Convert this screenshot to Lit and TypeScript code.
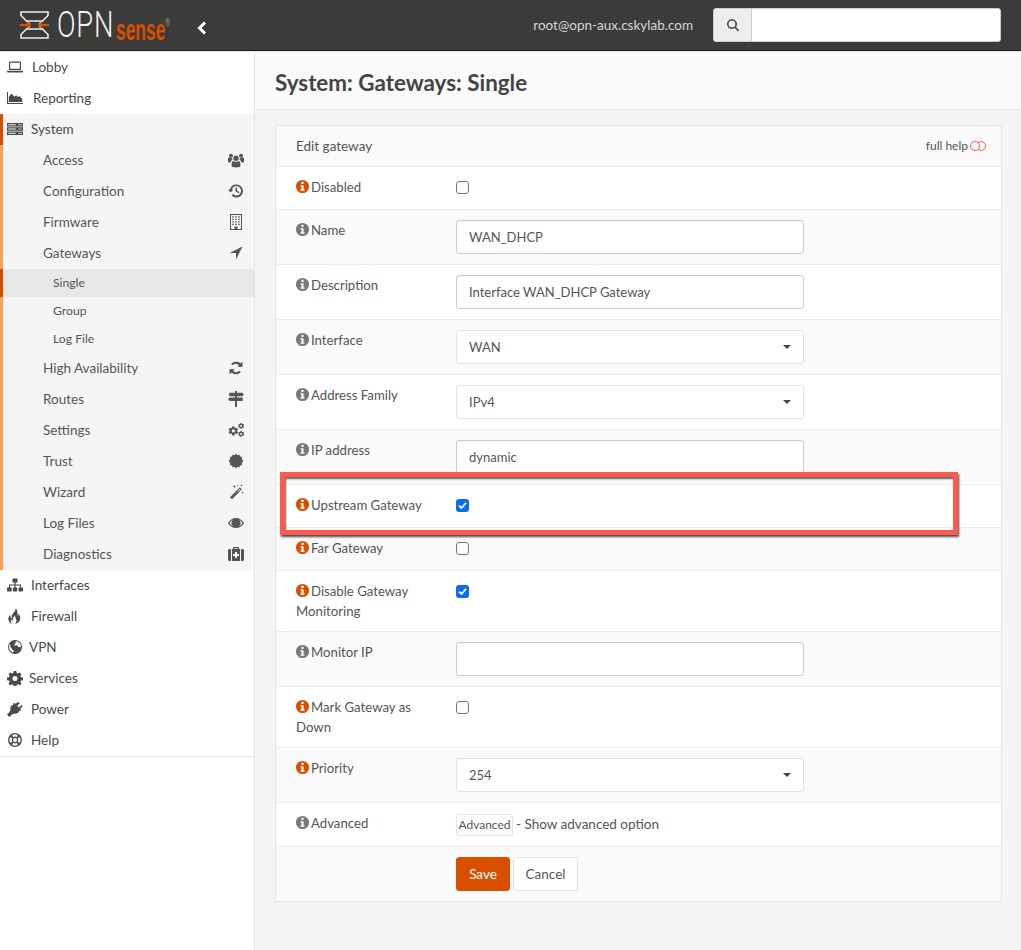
import { LitElement, html, css, svg } from 'lit';
import { customElement } from 'lit/decorators.js';

// Hand drawn versions of the icon glyphs, all on a 16 unit grid
const ICONS: Record<string, unknown> = {
  laptop: svg`<path fill-rule="evenodd" d="M3 2.500h10a1 1 0 0 1 1 1V11H2V3.500a1 1 0 0 1 1-1zM3.200 3.700v6.100h9.600V3.700z"/><path d="M0 11.700h16v.8a1 1 0 0 1-1 1H1a1 1 0 0 1-1-1z"/>`,
  chart: svg`<path d="M0 2h1v11h15v1H0z"/><path d="M1.800 12V7l2.600-3.400 3 3.200 1.800-1.600L11 7l1.600-1 2.600 3v3z"/>`,
  server: svg`<path fill-rule="evenodd" d="M0 2h16v3.400H0zM0 6.300h16v3.400H0zM0 10.600h16V14H0zM1.200 3.200v1h7.600v-1zM1.200 7.500v1h7.600v-1zM1.200 11.800v1h7.600v-1zM11.500 3.100v1.200h1.200V3.100zM13.500 3.100v1.200h1.200V3.100zM11.500 7.400v1.200h1.200V7.400zM13.500 7.400v1.200h1.200V7.400zM11.500 11.700v1.200h1.200v-1.200zM13.500 11.700v1.200h1.200v-1.200z"/>`,
  users: svg`<circle cx="8" cy="6.200" r="2.700"/><circle cx="3" cy="3.800" r="2"/><circle cx="13" cy="3.800" r="2"/><path d="M3.600 14.500v-2.600c0-2 1-3 2-3 .7.600 1.500.9 2.400.9s1.700-.3 2.400-.9c1 0 2 1 2 3v2.600c-1 .6-2.400.9-4.400.9s-3.400-.3-4.400-.9z"/><path d="M0 6.800c0-.8.500-1.500 1-1.500.5.400 1.200.7 2 .7.300 0 .500 0 .700-.1.200.800.500 1.400 1 1.900-1.200.4-2 1.300-2.200 2.700H1c-.6 0-1-.3-1-1zM16 6.800c0-.8-.5-1.500-1-1.500-.5.400-1.200.7-2 .7-.3 0-.5 0-.7-.1-.2.800-.5 1.400-1 1.900 1.200.4 2 1.300 2.200 2.700H15c.6 0 1-.3 1-1z"/>`,
  history: svg`<path d="M8.500 1.500a6.500 6.500 0 1 1-4.800 10.900l1.300-1.300a4.700 4.700 0 1 0-1.200-4.600H5.500L2.600 9.500 0 6.500h2A6.500 6.500 0 0 1 8.500 1.500z"/><path d="M7.600 4.500h1.500v3.300l2.300 1.300-.7 1.200-3.100-1.800z"/>`,
  building: svg`<path fill-rule="evenodd" d="M2 0h12v16H2zM3 1v14h3.500v-2.500h3V15H13V1zM4.200 2.200h1.500v1.300H4.200zM7.200 2.200h1.500v1.300H7.200zM10.200 2.200h1.500v1.300h-1.500zM4.200 4.700h1.500V6H4.200zM7.200 4.700h1.500V6H7.200zM10.200 4.700h1.500V6h-1.500zM4.200 7.200h1.500v1.300H4.200zM7.200 7.200h1.500v1.300H7.200zM10.200 7.200h1.500v1.300h-1.500zM4.200 9.700h1.500V11H4.200zM7.200 9.700h1.500V11H7.200zM10.200 9.700h1.500V11h-1.500z"/>`,
  arrow: svg`<path d="M14.500 1.500 8 14.500V8H1.500z"/>`,
  refresh: svg`<path d="M12.900 6.700A5.200 5.200 0 0 0 3.900 4.600" fill="none" stroke="currentColor" stroke-width="2.200"/><path d="M14.500 1.600v5.200H9.300z"/><path d="M3.100 9.300a5.200 5.200 0 0 0 9 2.100" fill="none" stroke="currentColor" stroke-width="2.200"/><path d="M1.500 14.400V9.200h5.200z"/>`,
  signs: svg`<path d="M7 0h2v1.800h5.300L16 3.500l-1.700 1.700H1.200V1.800H7zM7 5.200h2v1.400H7zM0 8.300l1.700-1.700h13v3.400H9v6H7v-6H1.700z"/>`,
  cogs: svg`<path fill-rule="evenodd" d="M4.200 4.500h2.300l.3 1.200 1 .5 1.200-.5 1.100 1.700-.9.9v1.200l.9.8-1.100 1.800-1.200-.5-1 .5-.3 1.300H4.200l-.3-1.300-1-.5-1.200.5L.6 10.300l.9-.8V8.300l-.9-.9 1.100-1.700 1.200.5 1-.5zM5.400 7.300a1.600 1.600 0 1 0 0 3.200 1.600 1.600 0 0 0 0-3.200z"/><path fill-rule="evenodd" d="M12.500 1h1.300l.2.800.7.4.8-.3.600 1-.6.600v.8l.6.600-.6 1-.8-.3-.7.4-.2.800h-1.300l-.2-.8-.7-.4-.8.3-.6-1 .6-.6v-.8l-.6-.6.6-1 .8.3.7-.4zM13.100 3a1 1 0 1 0 0 2 1 1 0 0 0 0-2zM12.500 9h1.300l.2.800.7.4.8-.3.600 1-.6.600v.8l.6.600-.6 1-.8-.3-.7.4-.2.800h-1.300l-.2-.8-.7-.4-.8.3-.6-1 .6-.6v-.8l-.6-.6.6-1 .8.3.7-.4zM13.100 11a1 1 0 1 0 0 2 1 1 0 0 0 0-2z"/>`,
  badge: svg`<circle cx="8" cy="8" r="5.800"/><path d="M8 .8l1.400 1.500 1.900-.7.7 1.900 2 .2-.2 2L15.200 8l-1.400 2.300.2 2-2 .2-.7 1.900-1.900-.7L8 15.200l-1.400-1.500-1.900.7-.7-1.900-2-.2.2-2L.8 8l1.400-2.300-.2-2 2-.2.7-1.900 1.900.7z"/>`,
  wand: svg`<path fill-rule="evenodd" d="M11.800 3.300l2 2L4 15.200l-2-2zM11.800 4.700l-2.300 2.300.6.600 2.300-2.300z"/><path d="M6.500 1l.5 1 1 .5-1 .5-.5 1L6 3l-1-.5 1-.5zM13.500 0l.4 1 1 .4-1 .4-.4 1-.4-1-1-.4 1-.4zM14.500 7.500l.4.800.8.400-.8.400-.4.800-.4-.8-.8-.4.800-.4zM9.800.8l.3.600.6.300-.6.300-.3.600-.3-.6-.6-.3.600-.3z"/>`,
  eye: svg`<path fill-rule="evenodd" d="M0 8c1.700-3 4.600-5 8-5s6.300 2 8 5c-1.700 3-4.600 5-8 5s-6.300-2-8-5zM1.500 8c1 1.500 2.300 2.700 3.900 3.400A4.300 4.300 0 0 1 5 4.500C3.500 5.300 2.400 6.500 1.500 8zM14.500 8c-.9-1.500-2-2.700-3.500-3.500a4.300 4.300 0 0 1-.4 6.900c1.600-.7 2.900-1.900 3.900-3.400z"/><circle cx="8" cy="7.500" r="3"/>`,
  medkit: svg`<path fill-rule="evenodd" d="M5 3V1.800A.8.800 0 0 1 5.800 1h4.400a.8.800 0 0 1 .8.800V3h1v12H4V3zM6.300 2.300V3h3.400v-.7zM7 6v2H5v2h2v2h2v-2h2V8H9V6z"/><path d="M3 3v12H1.500A1.500 1.500 0 0 1 0 13.500v-9A1.500 1.500 0 0 1 1.500 3zM13 3h1.500A1.500 1.500 0 0 1 16 4.500v9a1.500 1.500 0 0 1-1.500 1.500H13z"/>`,
  sitemap: svg`<path d="M5.500 1.500h5v4H8.600v2H14v3h1.300a.7.7 0 0 1 .7.700v2.600a.7.7 0 0 1-.7.700h-3.100a.7.7 0 0 1-.7-.7v-2.600a.7.7 0 0 1 .7-.7h.8V8.600H8.600v1.900h.9a.7.7 0 0 1 .7.700v2.600a.7.7 0 0 1-.7.700h-3a.7.7 0 0 1-.7-.7v-2.600a.7.7 0 0 1 .7-.7h.9V8.600H3.200v1.900H4a.7.7 0 0 1 .7.700v2.600a.7.7 0 0 1-.7.700H.7a.7.7 0 0 1-.7-.7v-2.600a.7.7 0 0 1 .7-.7H2v-3h5.400v-2H5.500z"/>`,
  fire: svg`<path d="M8.500 0c.5 2-.6 3.300-1.700 4.600C5.300 6.300 4 7.900 5 10.600 3.600 10 3 8.600 3.300 6.800 1.800 8.300 1 10 1.500 12c.4 1.700 1.700 3.200 3.500 4-1.200-1.500-1.500-3.200-.6-4.900.2 1 .8 1.600 1.500 1.900C5.400 10.500 6.600 8.800 8 7.500c-.2 2 1.900 3.500 1.400 5.800-.2.900-.6 1.800-1.300 2.700 2.500-.6 4.600-2.200 5.100-4.700.5-2.400-.6-4.600-2.300-5.900.2 1.100 0 2-.7 2.700C10.900 5 10.700 2 8.500 0z"/>`,
  globe: svg`<path fill-rule="evenodd" d="M8 1a7 7 0 1 1 0 14A7 7 0 0 1 8 1zM3 4.800c-.6.900-1 2-1 3.200 0 2.500 1.600 4.700 3.900 5.600.3-.7.800-1.100.8-1.900 0-.8-1-.8-1.500-1.300-.6-.6-.5-1.300-1.200-1.700C3.500 8.300 3 7.800 3.400 6.800zM9.500 2.300c-.3.500-.9.500-1.200 1-.2.500.5.900.2 1.400-.3.400-1 .2-1.200.7-.2.500.3 1 .8 1.100.8.200 1.300-.4 2-.1.800.300.800 1.200 1.400 1.700.5.400 1 .3 1.500.1.300-.2.700-.5 1-.2v-.2c0-2.700-1.900-5-4.500-5.500z"/>`,
  cog: svg`<path fill-rule="evenodd" d="M6.700 1h2.600l.4 2 1.300.5 1.700-1.100 1.800 1.800-1.100 1.700.6 1.300 2 .4v2.600l-2 .4-.6 1.300 1.100 1.700-1.800 1.800-1.700-1.100-1.300.5-.4 2H6.700l-.4-2-1.300-.5-1.700 1.100-1.800-1.800 1.100-1.700-.6-1.300-2-.4V7.600l2-.4.600-1.300-1.100-1.700 1.800-1.800L5 3.500l1.300-.5zM8 6a2.500 2.500 0 1 0 0 5 2.500 2.500 0 0 0 0-5z"/>`,
  plug: svg`<path d="M11.500 1l1.300 1.300L10.300 4.800l1.600 1.600 2.500-2.500L15.700 5.200l-2.500 2.500 1 1-1.200 1.200-.8-.2C11.800 12 9.500 13.200 7 12.500L4.800 13.700 2.400 16 0 13.600l2.300-2.400L3.500 9c-.7-2.500.5-4.800 2.800-5.200l-.2-.8L7.300 1.800l1 1z"/>`,
  lifering: svg`<path fill-rule="evenodd" d="M8 1a7 7 0 1 1 0 14A7 7 0 0 1 8 1zM5.300 3.100 6.100 5.300a3 3 0 0 1 3.800 0l.8-2.200a5.500 5.500 0 0 0-5.400 0zM3.100 5.300A5.500 5.500 0 0 0 3.100 10.700L5.300 9.900a3 3 0 0 1 0-3.800zM12.900 5.300l-2.200.8a3 3 0 0 1 0 3.800l2.200.8a5.500 5.500 0 0 0 0-5.400zM6.100 10.700l-.8 2.200a5.500 5.500 0 0 0 5.400 0l-.8-2.200a3 3 0 0 1-3.800 0zM8 6a2 2 0 1 0 0 4 2 2 0 0 0 0-4z"/>`,
  search: svg`<path fill-rule="evenodd" d="M6.800 1a5.800 5.800 0 0 1 4.700 9.200l3.700 3.700-1.500 1.500-3.700-3.700A5.800 5.800 0 1 1 6.800 1zM6.800 3a3.800 3.800 0 1 0 0 7.600 3.800 3.800 0 0 0 0-7.600z"/>`,
  info: svg`<path fill-rule="evenodd" d="M8 1a7 7 0 1 1 0 14A7 7 0 0 1 8 1zM6.900 3v2.200h2.200V3zM5.900 6.600v1.400h1v3H5.900v1.500h4.200V11h-1V6.600z"/>`,
};

const icon = (name: string, cls = '') =>
  html`<svg class="icon ${cls}" viewBox="0 0 16 16" fill="currentColor">${ICONS[name]}</svg>`;

interface NavTop { label: string; icon: string; slot: number; }
interface NavSub { label: string; icon: string; }

const TOP_BEFORE: NavTop[] = [
  { label: 'Lobby', icon: 'laptop', slot: 25 },
  { label: 'Reporting', icon: 'chart', slot: 26 },
];
const SYSTEM_BEFORE: NavSub[] = [
  { label: 'Access', icon: 'users' },
  { label: 'Configuration', icon: 'history' },
  { label: 'Firmware', icon: 'building' },
  { label: 'Gateways', icon: 'arrow' },
];
const SYSTEM_AFTER: NavSub[] = [
  { label: 'High Availability', icon: 'refresh' },
  { label: 'Routes', icon: 'signs' },
  { label: 'Settings', icon: 'cogs' },
  { label: 'Trust', icon: 'badge' },
  { label: 'Wizard', icon: 'wand' },
  { label: 'Log Files', icon: 'eye' },
  { label: 'Diagnostics', icon: 'medkit' },
];
const TOP_AFTER: NavTop[] = [
  { label: 'Interfaces', icon: 'sitemap', slot: 24 },
  { label: 'Firewall', icon: 'fire', slot: 24 },
  { label: 'VPN', icon: 'globe', slot: 22 },
  { label: 'Services', icon: 'cog', slot: 22 },
  { label: 'Power', icon: 'plug', slot: 24 },
  { label: 'Help', icon: 'lifering', slot: 24 },
];

type Field =
  | { kind: 'check'; checked?: boolean }
  | { kind: 'text'; value: string }
  | { kind: 'select'; value: string }
  | { kind: 'advanced' };

interface Row { label: string; help?: boolean; field: Field; }

const ROWS: Row[] = [
  { label: 'Disabled', help: true, field: { kind: 'check' } },
  { label: 'Name', field: { kind: 'text', value: 'WAN_DHCP' } },
  { label: 'Description', field: { kind: 'text', value: 'Interface WAN_DHCP Gateway' } },
  { label: 'Interface', field: { kind: 'select', value: 'WAN' } },
  { label: 'Address Family', field: { kind: 'select', value: 'IPv4' } },
  { label: 'IP address', field: { kind: 'text', value: 'dynamic' } },
  { label: 'Upstream Gateway', help: true, field: { kind: 'check', checked: true } },
  { label: 'Far Gateway', help: true, field: { kind: 'check' } },
  { label: 'Disable Gateway Monitoring', help: true, field: { kind: 'check', checked: true } },
  { label: 'Monitor IP', field: { kind: 'text', value: '' } },
  { label: 'Mark Gateway as Down', help: true, field: { kind: 'check' } },
  { label: 'Priority', help: true, field: { kind: 'select', value: '254' } },
  { label: 'Advanced', field: { kind: 'advanced' } },
];

@customElement('app-root')
export class AppRoot extends LitElement {
  static styles = css`
    :host {
      display: block;
      width: 1021px;
      height: 950px;
      overflow: hidden;
      font-family: Lato, 'Open Sans', sans-serif;
      font-size: 13.5px;
      line-height: 20px;
      color: #555;
      background: #f5f5f5;
    }
    * { box-sizing: border-box; }
    .icon { display: block; width: 16px; height: 16px; flex: none; }

    /* top bar */
    .topbar {
      height: 51px;
      display: flex;
      align-items: center;
      background: #3b3b3a;
      border-bottom: 1px solid #1f1f1f;
      padding: 0 20px 0 20px;
    }
    .logo { display: flex; align-items: center; width: 151px; height: 50px; overflow: hidden; }
    .logo svg { display: block; flex: none; }
    .opn {
      flex: none;
      width: 59px;
      margin-left: 8px;
      font-family: Roboto, 'Liberation Sans', sans-serif;
      font-size: 36px;
      font-weight: 300;
      line-height: 40px;
      letter-spacing: 1px;
      color: #f2f2f2;
      transform: scaleX(0.76);
      transform-origin: left center;
      white-space: nowrap;
    }
    .sense {
      flex: none;
      font-family: 'Liberation Sans', sans-serif;
      font-size: 30px;
      font-weight: 700;
      color: #d94f00;
      line-height: 30px;
      margin-top: 1px;
      transform: scaleX(0.58);
      transform-origin: left center;
      white-space: nowrap;
    }
    .reg { font-size: 11px; font-weight: 400; color: #999; vertical-align: 14px; }
    .collapse { color: #fff; margin: 5px 0 0 25px; width: 12px; height: 14px; flex: none; }
    .user { margin-left: auto; color: #d6d6d6; margin-right: 20px; }
    .search {
      display: flex;
      width: 288px;
      height: 34px;
      border: 1px solid #ccc;
      border-radius: 3px;
      background: #fff;
      overflow: hidden;
    }
    .search span {
      width: 38px;
      display: flex;
      align-items: center;
      justify-content: center;
      background: #eee;
      border-right: 1px solid #ccc;
      color: #555;
    }
    .search .icon { width: 14px; height: 14px; }
    .search input { flex: 1; min-width: 0; border: 0; outline: 0; background: #fff; }

    .body { display: flex; height: 899px; border-top: 1px solid #e5e5e5; }

    /* side menu */
    .side {
      width: 255px;
      flex: none;
      background: #fff;
      border-right: 1px solid #e5e5e5;
      color: #555;
    }
    .top, .sub, .subsub { display: flex; align-items: center; }
    .top { height: 31px; padding: 0 0 2px 7px; color: #4a4a4a; }
    .top .slot { flex: none; }
    .system { background: #f5f5f5; border-left: 3px solid #f4a15f; }
    .system .top { margin-left: -3px; padding-left: 4px; border-left: 3px solid #d94f00; }
    .sub { height: 31px; padding: 0 10px 2px 40px; justify-content: space-between; }
    .subsub { height: 28px; padding-left: 50px; font-size: 12.2px; }
    .subsub.active {
      background: #e8e8e8;
      margin-left: -3px;
      border-left: 3px solid #d94f00;
    }
    .side-end { border-bottom: 1px solid #e5e5e5; }

    /* content */
    .main { flex: 1; min-width: 0; }
    .title {
      height: 58px;
      display: flex;
      align-items: center;
      padding: 5px 0 0 20px;
      background: #fafafa;
      border-bottom: 1px solid #e8e8e8;
    }
    .title h1 { margin: 0; font-size: 22.4px; font-weight: 700; color: #444; }
    .card {
      position: relative;
      margin: 15px 19px 0 20px;
      border: 1px solid #e5e5e5;
      background: #fff;
    }
    .card-head {
      height: 41px;
      display: flex;
      align-items: center;
      justify-content: space-between;
      padding: 0 15px 0 20px;
      background: #fafafa;
      border-bottom: 1px solid #ececec;
    }
    .fullhelp { display: flex; align-items: center; gap: 2px; font-size: 12px; }
    .toggle { display: block; width: 16px; height: 10px; }
    .row {
      display: grid;
      grid-template-columns: 180px 348px;
      padding: 10px 0;
      border-bottom: 1px solid #ececec;
      background: #fff;
    }
    .row.alt { background: #fafafa; }
    .label { padding: 0 20px 0 20px; line-height: 20px; font-size: 13.2px; }
    .label .icon {
      display: inline-block;
      width: 15px;
      height: 15px;
      vertical-align: -2px;
      margin: 0 1px 0 -1px;
      color: #777;
    }
    .label .icon.on { color: #d94f00; }
    .checkline { height: 22px; display: flex; align-items: center; }
    input.check {
      appearance: none;
      display: block;
      width: 13px;
      height: 13px;
      margin: 0 0 2px 0;
      border: 1px solid #767676;
      border-radius: 3px;
      background: #fff;
    }
    input.check:checked { border: 0; background: #0b6cf2; }
    .checkbox { position: relative; display: block; }
    .tick { position: absolute; left: 2px; top: 2px; width: 9px; height: 9px; pointer-events: none; }
    .control {
      display: flex;
      align-items: center;
      justify-content: space-between;
      width: 348px;
      height: 34px;
      padding: 0 12px;
      border: 1px solid #ccc;
      border-radius: 3px;
      background: #fff;
      font: inherit;
      font-size: 13px;
      color: #555;
      outline: 0;
      box-shadow: inset 0 1px 1px rgba(0, 0, 0, 0.04);
    }
    .select { border-color: #e2e2e2; box-shadow: none; }
    .caret {
      width: 0;
      height: 0;
      border-left: 4px solid transparent;
      border-right: 4px solid transparent;
      border-top: 4px solid #444;
    }
    .adv { display: flex; align-items: flex-start; padding-top: 1px; }
    .adv-btn {
      height: 22px;
      width: 57px;
      padding: 0;
      font: inherit;
      font-size: 12px;
      line-height: 20px;
      color: #555;
      background: #fff;
      border: 1px solid #e2e2e2;
      border-radius: 3px;
      margin-right: 3px;
    }
    .actions {
      display: grid;
      grid-template-columns: 180px 1fr;
      padding: 10px 0 10px;
      background: #fafafa;
    }
    .buttons { display: flex; gap: 3px; }
    .btn {
      height: 34px;
      padding: 0;
      font: inherit;
      border-radius: 3px;
      border: 1px solid #e2e2e2;
      background: #fff;
      color: #555;
      width: 65px;
    }
    .btn.save { width: 54px; background: #d94f00; border-color: #d94f00; color: #fff; }

    /* red annotation frame painted on top of the form */
    .callout {
      position: absolute;
      left: 4px;
      top: 346px;
      width: 678px;
      height: 63px;
      border: 5px solid #fd5a4d;
      box-shadow: 1px 2px 2px rgba(0, 0, 0, 0.7), inset 1px 2px 2px rgba(0, 0, 0, 0.6);
      pointer-events: none;
    }
  `;

  private renderField(f: Field) {
    switch (f.kind) {
      case 'check':
        return html`<div class="checkline">
          <label class="checkbox">
            <input class="check" type="checkbox" ?checked=${f.checked} />
            ${f.checked
              ? html`<svg class="tick" viewBox="0 0 9 9"><path d="M1 4.600 3.500 7 8 1.800" fill="none" stroke="#fff" stroke-width="1.800"/></svg>`
              : ''}
          </label>
        </div>`;
      case 'text':
        return html`<input class="control" type="text" .value=${f.value} />`;
      case 'select':
        return html`<button class="control select">${f.value}<span class="caret"></span></button>`;
      case 'advanced':
        return html`<div class="adv"><button class="adv-btn">Advanced</button><span>- Show advanced option</span></div>`;
    }
  }

  private renderTop(t: NavTop) {
    return html`<div class="top"><span class="slot" style="width:${t.slot}px">${icon(t.icon)}</span>${t.label}</div>`;
  }

  private renderSub(s: NavSub) {
    return html`<div class="sub">${s.label}${icon(s.icon)}</div>`;
  }

  render() {
    return html`
      <header class="topbar">
        <div class="logo">
          <svg width="29" height="28" viewBox="0 0 29 28" fill="none">
            <path d="M1 1h27v3.500L22.500 10h-16L1 4.500zM1 27h27v-3.500L22.500 18h-16L1 23.500z" stroke="#eee" stroke-width="1.600"/>
            <path d="M6.500 10l3.500 3M22.500 10 19 13M6.500 18l3.500-3M22.500 18 19 15" stroke="#eee" stroke-width="1.600"/>
            <path d="M0 14h10M6.500 11l3.500 3-3.500 3M29 14H19M22.500 11 19 14l3.500 3" stroke="#d94f00" stroke-width="1.800"/>
          </svg>
          <span class="opn">OPN</span>
          <span class="sense">sense<span class="reg">®</span></span>
        </div>
        <svg class="collapse" viewBox="0 0 12 14" fill="none"><path d="M9 1.500 3.500 7 9 12.500" stroke="currentColor" stroke-width="3"/></svg>
        <span class="user">root@opn-aux.cskylab.com</span>
        <div class="search"><span>${icon('search')}</span><input type="text" /></div>
      </header>
      <div class="body">
        <nav class="side">
          ${TOP_BEFORE.map((t) => this.renderTop(t))}
          <div class="system">
            ${this.renderTop({ label: 'System', icon: 'server', slot: 24 })}
            ${SYSTEM_BEFORE.map((s) => this.renderSub(s))}
            <div class="subsub active">Single</div>
            <div class="subsub">Group</div>
            <div class="subsub">Log File</div>
            ${SYSTEM_AFTER.map((s) => this.renderSub(s))}
          </div>
          ${TOP_AFTER.map((t) => this.renderTop(t))}
          <div class="side-end"></div>
        </nav>
        <main class="main">
          <div class="title"><h1>System: Gateways: Single</h1></div>
          <section class="card">
            <div class="card-head">
              <span>Edit gateway</span>
              <span class="fullhelp">full help
                <svg class="toggle" viewBox="0 0 16 10" fill="none" stroke="#fd5a4d"><circle cx="11" cy="5" r="4.500"/><circle cx="5" cy="5" r="4.500" fill="#fafafa"/></svg>
              </span>
            </div>
            ${ROWS.map(
              (r, i) => html`<div class="row ${i % 2 ? 'alt' : ''}">
                <div class="label">${icon('info', r.help ? 'on' : '')}${r.label}</div>
                <div>${this.renderField(r.field)}</div>
              </div>`
            )}
            <div class="actions">
              <div></div>
              <div class="buttons">
                <button class="btn save">Save</button>
                <button class="btn">Cancel</button>
              </div>
            </div>
            <div class="callout"></div>
          </section>
        </main>
      </div>
    `;
  }
}
